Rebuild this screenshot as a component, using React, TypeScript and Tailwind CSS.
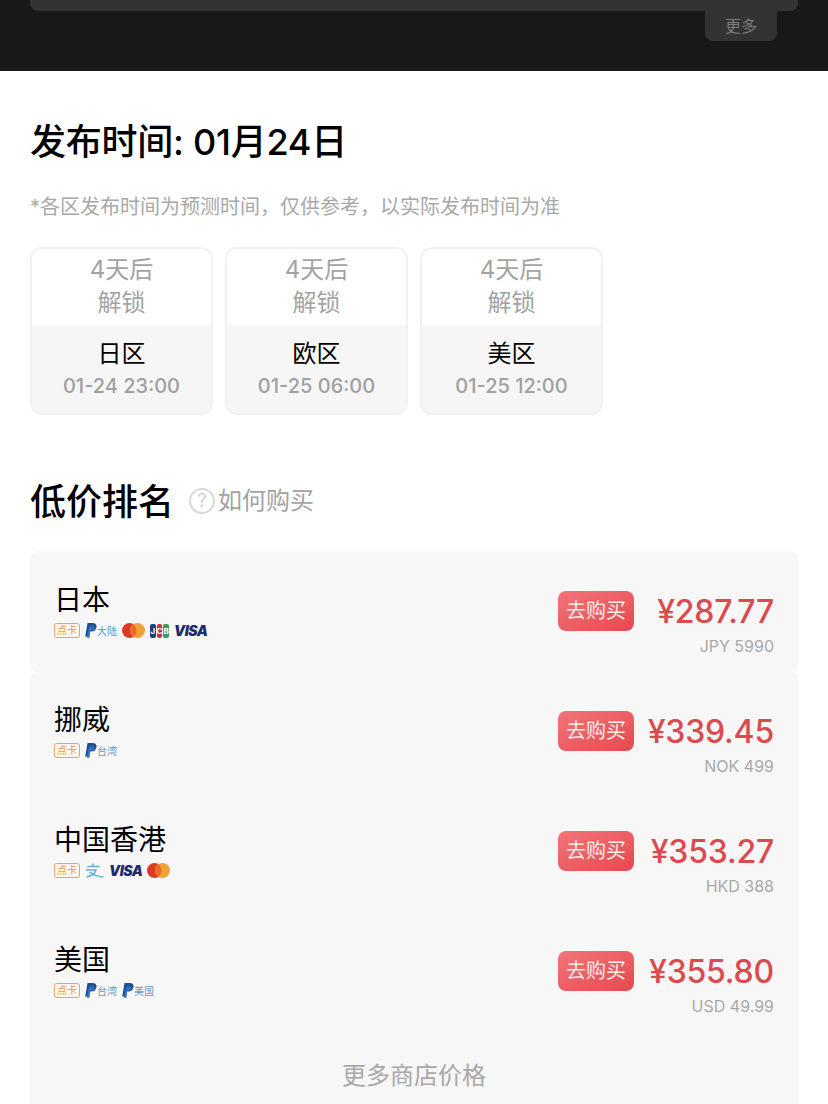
const font = "font-['Inter','Noto_Sans_CJK_SC',sans-serif]";

const DianKa = () => (
  <span className="w-[26px] h-[15px] rounded-[3px] border border-[#e5a468] bg-[#fdf6ee] text-[#e09a58] text-[10px] leading-[13px] text-center shrink-0">
    点卡
  </span>
);

const PayPal = ({ label }: { label?: string }) => (
  <span className="flex items-center">
    <svg width="12" height="15" viewBox="0 0 12 15">
      <path d="M2.500 0h5C10.500 0 12 1.500 11.500 4.200c-.5 2.800-2.500 4.300-5.200 4.300H5L4 13.500H.2z" fill="#1f4f98" />
      <path d="M4.200 3.500h3.500c1.500 0 2 .8 1.700 2-.3 1.300-1.200 2-2.700 2H5.200L4.500 14.800H1.800z" fill="#2f73bd" />
    </svg>
    {label && <span className="text-[#5d9bc8] text-[10px] leading-[15px] mt-[2px]">{label}</span>}
  </span>
);

const MasterCard = () => (
  <svg width="23" height="15" viewBox="0 0 23 15">
    <circle cx="7.500" cy="7.500" r="7.500" fill="#dd3a22" />
    <circle cx="15.500" cy="7.500" r="7.500" fill="#f2a138" />
    <path d="M11.500 1.500a7.500 7.500 0 0 1 0 12a7.500 7.500 0 0 1 0-12z" fill="#ee6a26" />
  </svg>
);

const Jcb = () => (
  <span className="flex gap-[1px] h-[14px] w-[19px] text-white text-[8px] font-bold leading-[14px] text-center">
    <span className="flex-1 rounded-[2px] bg-[#1f3f80]">J</span>
    <span className="flex-1 rounded-[2px] bg-[#c8303f]">C</span>
    <span className="flex-1 rounded-[2px] bg-[#3f9a55]">B</span>
  </span>
);

const Visa = () => (
  <span className="text-[#1f2a6e] text-[14px] leading-[16px] font-black italic tracking-[-0.5px]">VISA</span>
);

const Alipay = () => (
  <svg width="19" height="15" viewBox="0 0 19 15" fill="none" stroke="#62aee0" strokeWidth="1.600">
    <path d="M2.500 3.500h12M8 .5v3M1 7h10c-1 3-4 6-9.500 7" />
    <path d="M4.500 9c3 2.500 7.500 4.500 14 5" />
  </svg>
);

type Store = {
  name: string;
  icons: React.ReactNode;
  price: string;
  local: string;
};

const stores: Store[] = [
  {
    name: "挪威",
    icons: <PayPal label="台湾" />,
    price: "¥339.45",
    local: "NOK 499",
  },
  {
    name: "中国香港",
    icons: (
      <>
        <Alipay />
        <Visa />
        <MasterCard />
      </>
    ),
    price: "¥353.27",
    local: "HKD 388",
  },
  {
    name: "美国",
    icons: (
      <>
        <PayPal label="台湾" />
        <PayPal label="美国" />
      </>
    ),
    price: "¥355.80",
    local: "USD 49.99",
  },
];

const regions = [
  { name: "日区", time: "01-24 23:00" },
  { name: "欧区", time: "01-25 06:00" },
  { name: "美区", time: "01-25 12:00" },
];

const Row = ({ name, icons, price, local }: Store) => (
  <div className="h-[120px] pl-6 pr-6 pt-[29px] flex justify-between">
    <div className="flex flex-col">
      <span className="text-black text-[28px] leading-[38px] h-[38px] pt-[1px]">{name}</span>
      <div className="flex items-center gap-[5px] h-[15px] mt-[5px]">
        <DianKa />
        {icons}
      </div>
    </div>
    <div className="w-[216px] flex flex-col items-end mt-[11px]">
      <div className="w-full flex items-center justify-between h-10">
        <button className="w-[76px] h-10 rounded-lg bg-gradient-to-br from-[#f27479] to-[#e5484f] text-[#fde9e9] text-[20px]">
          去购买
        </button>
        <span className="text-[#dc4a4e] text-[32px] leading-10 font-medium tracking-[-0.2px] pt-[1px]">{price}</span>
      </div>
      <span className="text-[#a9a9a9] text-base leading-5 mt-[5px]">{local}</span>
    </div>
  </div>
);

export default function App() {
  return (
    <div className={`${font} w-[828px] h-[1104px] overflow-hidden bg-white`}>
      {/* Dark header */}
      <header className="h-[71px] bg-[#181818] px-[30px]">
        <div className="h-[11px] bg-[#333333] rounded-b-lg"></div>
        <div className="flex justify-end pr-[21px]">
          <div className="w-[72px] h-[30px] pt-[1px] bg-[#333333] rounded-b-lg text-[#7d7d7d] text-base text-center leading-[29px]">
            更多
          </div>
        </div>
      </header>

      <main className="px-[30px]">
        {/* Release time */}
        <h1 className="text-black text-[36px] leading-[50px] font-medium mt-[46px] tracking-[-0.25px]">发布时间: 01月24日</h1>
        <p className="text-[#a8a8a8] text-[20px] leading-7 mt-[26px]">*各区发布时间为预测时间，仅供参考，以实际发布时间为准</p>

        <div className="flex gap-3 mt-[26px]">
          {regions.map((r) => (
            <div key={r.name} className="w-[183px] h-[168px] rounded-xl border-2 border-[#f1f1f1] overflow-hidden text-center">
              <div className="h-[76px] bg-white text-[#a3a3a3] text-2xl leading-8 pt-[5px]">
                <div>4天后</div>
                <div className="mt-[1px]">解锁</div>
              </div>
              <div className="h-[88px] bg-[#f6f6f6] pt-[13px]">
                <div className="text-black text-2xl leading-8">{r.name}</div>
                <div className="text-[#a0a0a0] text-[20px] leading-8 font-medium">{r.time}</div>
              </div>
            </div>
          ))}
        </div>

        {/* Price ranking */}
        <div className="flex items-center mt-[59px] h-[56px]">
          <h2 className="text-black text-[36px] leading-[56px] font-medium">低价排名</h2>
          <span className="ml-[15px] mt-[-2px] w-[26px] h-[26px] rounded-full border-2 border-[#d8d8d8] text-[#d0d0d0] text-[18px] leading-[22px] text-center">?</span>
          <span className="ml-[3px] mt-[-2px] text-[#a3a3a3] text-[24px]">如何购买</span>
        </div>

        <section className="mt-[21px]">
          <div className="bg-[#f7f7f8] rounded-lg">
            <Row
              name="日本"
              icons={
                <>
                  <PayPal label="大陆" />
                  <MasterCard />
                  <Jcb />
                  <Visa />
                </>
              }
              price="¥287.77"
              local="JPY 5990"
            />
          </div>
          <div className="bg-[#f7f7f8] rounded-t-lg h-[440px]">
            {stores.map((s) => (
              <Row key={s.name} {...s} />
            ))}
            <div className="text-center text-[#a8a8a8] text-2xl leading-9 pt-[27px]">更多商店价格</div>
          </div>
        </section>
      </main>
    </div>
  );
}
